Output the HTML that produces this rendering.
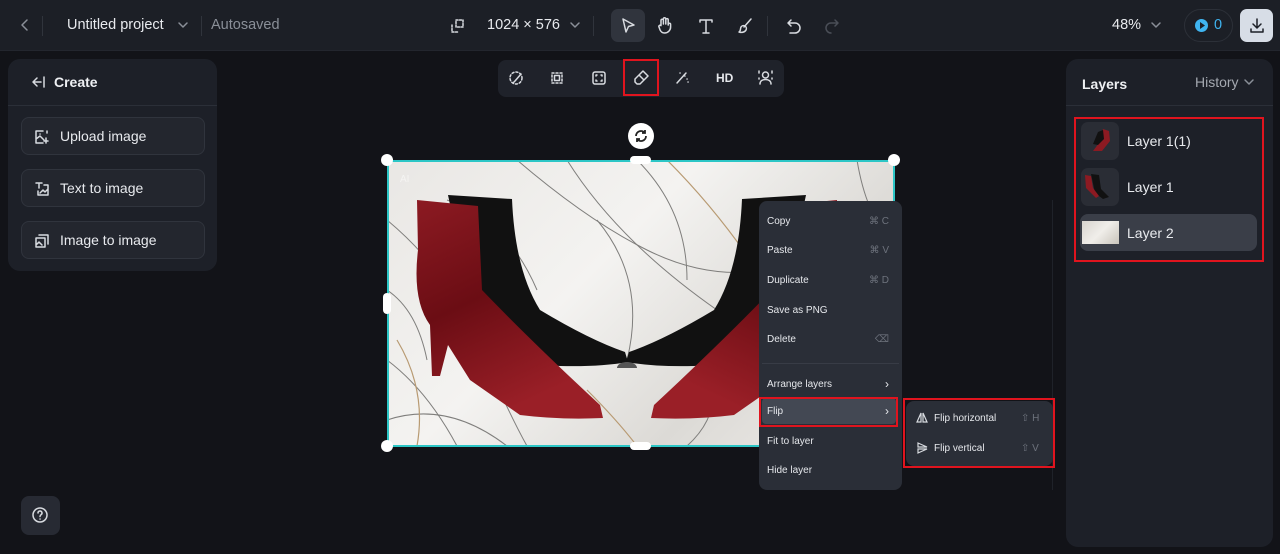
<!DOCTYPE html>
<html><head><meta charset="utf-8"><style>
*{box-sizing:border-box;margin:0;padding:0}
body{width:1280px;height:554px;overflow:hidden;background:#121318;font-family:"Liberation Sans",sans-serif;color:#e6e8ec;position:relative}
.abs{position:absolute}
.top{left:0;top:0;width:1280px;height:51px;background:#1c1f26;border-bottom:1px solid #23262e}
.panel{background:#1d2028;border-radius:12px}
.btn{position:absolute;left:21px;width:184px;height:38px;border:1px solid #30343d;background:#23262e;border-radius:8px;font-size:14px;color:#e8eaee;display:flex;align-items:center;padding-left:38px}
.btn svg{position:absolute;left:12px;top:11px}
.menu{background:#2a2e37;border-radius:8px;font-size:10px;color:#e6e8ec}
.mi{position:absolute;left:8px;font-size:10px}
.sc{position:absolute;right:13px;color:#6d727c;font-size:10px}
.ico{stroke:#d8dbe0;fill:none;stroke-width:1.5;stroke-linecap:round;stroke-linejoin:round}
</style></head><body>
<div class="abs top"></div>
<svg class="abs" style="left:18px;top:18px" width="14" height="14"><path class="ico" style="stroke:#8a8f98" d="M9 2 L4 7 L9 12"/></svg>
<div class="abs" style="left:42px;top:16px;width:1px;height:20px;background:#30343c"></div>
<div class="abs" style="left:67px;top:17px;font-size:14.5px;color:#e8eaee">Untitled project</div>
<svg class="abs" style="left:177px;top:20px" width="12" height="10"><path class="ico" style="stroke:#8a8f98" d="M2 3 L6 7 L10 3"/></svg>
<div class="abs" style="left:201px;top:16px;width:1px;height:20px;background:#30343c"></div>
<div class="abs" style="left:211px;top:17px;font-size:14.5px;color:#8a8f98">Autosaved</div>
<svg class="abs" style="left:450px;top:18px" width="16" height="16"><path class="ico" d="M6 2h7v7H6z M2 7v7h7" stroke-dasharray="2 1.5"/></svg>
<div class="abs" style="left:487px;top:17px;font-size:14.5px;color:#e8eaee">1024 × 576</div>
<svg class="abs" style="left:569px;top:20px" width="12" height="10"><path class="ico" style="stroke:#8a8f98" d="M2 3 L6 7 L10 3"/></svg>
<div class="abs" style="left:593px;top:16px;width:1px;height:20px;background:#30343c"></div>
<div class="abs" style="left:611px;top:9px;width:34px;height:33px;background:#30343d;border-radius:7px"></div>
<svg class="abs" style="left:619px;top:17px" width="18" height="18"><path class="ico" d="M4 2 L15 8 L9.5 9.5 L7 15 Z"/></svg>
<svg class="abs" style="left:656px;top:16px" width="18" height="18"><path class="ico" d="M5 9V4.5a1.2 1.2 0 0 1 2.4 0V8 M7.4 8V3a1.2 1.2 0 0 1 2.4 0v5 M9.8 8V3.8a1.2 1.2 0 0 1 2.4 0V9 M12.2 8.5a1.2 1.2 0 0 1 2.4 0V11a6 6 0 0 1-6 6 5 5 0 0 1-4.5-3L3 11a1.2 1.2 0 0 1 2-1.3"/></svg>
<svg class="abs" style="left:697px;top:17px" width="18" height="18"><path class="ico" d="M3 3h12M9 3v13M6 16h6M3 3v2M15 3v2"/></svg>
<svg class="abs" style="left:736px;top:17px" width="18" height="18"><path class="ico" d="M15 2 L8 10 M9 9a3 3 0 0 0-4 1c-1 2 0 4-2 5 3 1 6 0 7-2a3 3 0 0 0-1-4z"/></svg>
<div class="abs" style="left:767px;top:16px;width:1px;height:20px;background:#30343c"></div>
<svg class="abs" style="left:785px;top:17px" width="18" height="18"><path class="ico" d="M6 3L3 6l3 3 M3 6h7a5 5 0 0 1 0 10H5"/></svg>
<svg class="abs" style="left:823px;top:17px" width="18" height="18"><path class="ico" style="stroke:#4a4e57" d="M12 3l3 3-3 3 M15 6H8a5 5 0 0 0 0 10"/></svg>
<div class="abs" style="left:1112px;top:17px;font-size:14.5px;color:#e8eaee">48%</div>
<svg class="abs" style="left:1150px;top:20px" width="12" height="10"><path class="ico" style="stroke:#8a8f98" d="M2 3 L6 7 L10 3"/></svg>
<div class="abs" style="left:1184px;top:9px;width:49px;height:33px;border:1px solid #2c3038;border-radius:17px"></div>
<div class="abs" style="left:1195px;top:19px;width:13px;height:13px;border-radius:50%;background:#3fb4f0"></div>
<svg class="abs" style="left:1197px;top:21px" width="9" height="9"><path d="M3 1L8 4.5 3 8z" fill="#1c1f26"/></svg>
<div class="abs" style="left:1214px;top:17px;font-size:14.5px;color:#3fb4f0">0</div>
<div class="abs" style="left:1240px;top:9px;width:33px;height:33px;background:#d7dde6;border-radius:7px"></div>
<svg class="abs" style="left:1248px;top:17px" width="18" height="18"><path class="ico" style="stroke:#1c1f26" d="M9 2v9M5 7l4 4 4-4M3 12v3h12v-3"/></svg>

<div class="abs panel" style="left:8px;top:59px;width:209px;height:212px"></div>
<div class="abs" style="left:8px;top:105px;width:209px;height:1px;background:#2b2f38"></div>
<svg class="abs" style="left:30px;top:75px" width="16" height="14"><path class="ico" d="M7 3L3 7l4 4M3 7h8M14 2v10"/></svg>
<div class="abs" style="left:54px;top:74px;font-size:14px;font-weight:bold;color:#eef0f3">Create</div>
<div class="btn" style="top:117px"><svg width="16" height="16"><path class="ico" d="M9 2H2v12h7M2 10l4-3 4 4 M6 5h.1 M12 9v5M10 12h4 M13 2v2"/></svg>Upload image</div>
<div class="btn" style="top:169px"><svg width="16" height="16"><path class="ico" d="M2 2h6M5 2v5 M10 4h4v10H4v-4 M6 12l3-3 2 2 3-3"/></svg>Text to image</div>
<div class="btn" style="top:221px"><svg width="16" height="16"><path class="ico" d="M5 2h9v9 M2 5h9v9H2z M2 12l3-3 3 3"/></svg>Image to image</div>
<div class="abs" style="left:21px;top:496px;width:39px;height:39px;background:#272a33;border-radius:8px"></div>
<svg class="abs" style="left:31px;top:506px" width="18" height="18"><circle cx="9" cy="9" r="7" class="ico"/><path class="ico" d="M7 7a2 2 0 1 1 3 1.7c-.8.5-1 1-1 1.8M9 13h.1"/></svg>

<div class="abs" style="left:498px;top:60px;width:286px;height:37px;background:#1f222a;border-radius:8px"></div>
<svg class="abs" style="left:508px;top:70px" width="16" height="16"><circle cx="8" cy="8" r="6" class="ico" stroke-dasharray="2 2"/><path class="ico" d="M13 4L7 11 M7 11l-2 2"/></svg>
<svg class="abs" style="left:549px;top:70px" width="16" height="16"><path class="ico" d="M3 3h10v10H3z" stroke-dasharray="2 2"/><rect x="5.5" y="5.5" width="5" height="5" class="ico"/></svg>
<svg class="abs" style="left:591px;top:70px" width="16" height="16"><rect x="2" y="2" width="12" height="12" rx="2" class="ico"/><path class="ico" d="M5 6V5h1M10 5h1v1M11 10v1h-1M6 11H5v-1"/></svg>
<div class="abs" style="left:623px;top:59px;width:36px;height:37px;border:2px solid #e0141e"></div>
<svg class="abs" style="left:633px;top:69px" width="17" height="17"><path class="ico" d="M10 2l5 5-8 8H4l-2-2v-3z M6 6l5 5"/></svg>
<svg class="abs" style="left:674px;top:70px" width="16" height="16"><path class="ico" d="M12 3L3 13 M10 5l1 1 M13 9h.1M14 12h.1M6 3h.1"/></svg>
<div class="abs" style="left:716px;top:71px;font-size:12px;font-weight:bold;color:#e6e8ec">HD</div>
<svg class="abs" style="left:757px;top:69px" width="17" height="17"><circle cx="8.5" cy="6" r="3" class="ico"/><path class="ico" d="M3 15c0-3 2.5-4.5 5.5-4.5S14 12 14 15 M2 2v2M15 2v2M2 9v1M15 9v1"/></svg>

<div class="abs" style="left:628px;top:123px;width:26px;height:26px;border-radius:50%;background:#fff"></div>
<svg class="abs" style="left:633px;top:128px" width="16" height="16"><path d="M3 8a5 5 0 0 1 9-3 M13 8a5 5 0 0 1-9 3 M12 2v3h-3 M4 14v-3h3" stroke="#222" stroke-width="1.8" fill="none"/></svg>

<div class="abs" style="left:387px;top:160px;width:507px;height:286px;overflow:hidden;background:linear-gradient(135deg,#e9e7e4,#f4f3f1 40%,#dcdad6 70%,#efedea)">
<svg width="507" height="286" style="position:absolute;left:0;top:0">
<g fill="none" stroke="#7f7e7c" stroke-width="1">
<path d="M0 60 Q60 110 90 180 T140 286"/><path d="M130 0 Q200 60 260 90 T380 110"/><path d="M180 0 Q230 80 330 150 T420 286"/><path d="M0 200 Q40 230 70 286"/><path d="M250 0 Q300 50 300 120"/><path d="M470 0 Q480 60 507 80"/><path d="M0 130 Q30 150 40 200"/><path d="M320 200 Q340 250 300 286"/><path d="M60 40 Q120 60 150 130"/><path d="M210 60 Q260 120 240 200"/><path d="M0 260 Q60 240 120 286"/>
</g>
<g fill="none" stroke="#b89a72" stroke-width="1.2"><path d="M280 0 Q330 50 370 110"/><path d="M10 180 Q40 230 30 286"/><path d="M200 230 Q230 260 250 286"/></g>
</svg>
<div class="abs" style="left:13px;top:14px;font-size:10px;color:rgba(255,255,255,.5)">AI</div>
</div>
<svg class="abs" style="left:0;top:0" width="1280" height="554">
<defs><linearGradient id="rg" x1="0" y1="0" x2="0.4" y2="1"><stop offset="0" stop-color="#8c1a22"/><stop offset="0.5" stop-color="#6b0d14"/><stop offset="1" stop-color="#9a1f27"/></linearGradient></defs>
<g id="bt">
<path d="M448,195 L512,199 Q515,270 540,310 Q590,340 625,352 L628,362 Q600,367 560,366 L480,360 Q470,300 448,195 Z" fill="#111"/>
<path d="M417,200 L478,206 L482,290 Q530,340 600,405 L603,418 Q560,420 520,415 L470,380 L448,345 L440,376 L432,376 L430,325 Q412,300 418,250 Z" fill="url(#rg)"/>
</g>
<use href="#bt" transform="translate(1254,0) scale(-1,1)"/>
<path d="M617 368 h20 a10 6 0 0 0-20 0z" fill="#555"/>
</svg>
<div class="abs" style="left:387px;top:160px;width:508px;height:287px;border:2px solid #2cc6c6"></div>
<div class="abs" style="left:381px;top:154px;width:12px;height:12px;border-radius:50%;background:#fff"></div>
<div class="abs" style="left:888px;top:154px;width:12px;height:12px;border-radius:50%;background:#fff"></div>
<div class="abs" style="left:381px;top:440px;width:12px;height:12px;border-radius:50%;background:#fff"></div>
<div class="abs" style="left:630px;top:156px;width:21px;height:8px;border-radius:4px;background:#fff"></div>
<div class="abs" style="left:630px;top:442px;width:21px;height:8px;border-radius:4px;background:#fff"></div>
<div class="abs" style="left:383px;top:293px;width:8px;height:21px;border-radius:4px;background:#fff"></div>
<div class="abs" style="left:1052px;top:200px;width:1px;height:290px;background:#1f2229"></div>

<div class="abs menu" style="left:759px;top:201px;width:143px;height:289px">
<div class="mi" style="top:15px">Copy</div><div class="sc" style="top:15px">⌘ C</div>
<div class="mi" style="top:44px">Paste</div><div class="sc" style="top:44px">⌘ V</div>
<div class="mi" style="top:74px">Duplicate</div><div class="sc" style="top:74px">⌘ D</div>
<div class="mi" style="top:104px">Save as PNG</div>
<div class="mi" style="top:133px">Delete</div><div class="sc" style="top:133px">⌫</div>
<div class="abs" style="left:3px;top:162px;width:137px;height:1px;background:#383c46"></div>
<div class="mi" style="top:178px">Arrange layers</div><div class="sc" style="top:176px;color:#e6e8ec;font-size:12px">›</div>
<div class="abs" style="left:3px;top:197px;width:134px;height:26px;background:#434853;border-radius:4px"></div>
<div class="mi" style="top:205px">Flip</div><div class="sc" style="top:203px;color:#e6e8ec;font-size:12px">›</div>
<div class="mi" style="top:235px">Fit to layer</div>
<div class="mi" style="top:264px">Hide layer</div>
</div>
<div class="abs" style="left:759px;top:397px;width:139px;height:30px;border:2px solid #e0141e"></div>
<div class="abs menu" style="left:906px;top:401px;width:147px;height:65px"></div>
<div class="abs" style="left:903px;top:398px;width:152px;height:70px;border:2px solid #e0141e"></div>
<svg class="abs" style="left:916px;top:412px" width="12" height="11"><path d="M5 1L1 10h4z M7 1l4 9H7z" fill="none" stroke="#d8dbe0" stroke-width="1.2"/></svg>
<div class="abs" style="left:934px;top:413px;font-size:10px">Flip horizontal</div><div class="abs" style="left:1021px;top:413px;font-size:10px;color:#6d727c">⇧ H</div>
<svg class="abs" style="left:917px;top:442px" width="11" height="12"><path d="M1 1l9 4H1z M1 7h9l-9 4z" fill="none" stroke="#d8dbe0" stroke-width="1.2"/></svg>
<div class="abs" style="left:934px;top:443px;font-size:10px">Flip vertical</div><div class="abs" style="left:1021px;top:443px;font-size:10px;color:#6d727c">⇧ V</div>

<div class="abs panel" style="left:1066px;top:59px;width:207px;height:488px"></div>
<div class="abs" style="left:1066px;top:105px;width:207px;height:1px;background:#2b2f38"></div>
<div class="abs" style="left:1082px;top:76px;font-size:14px;font-weight:bold;color:#eef0f3">Layers</div>
<div class="abs" style="left:1195px;top:74px;font-size:14px;color:#a4a8b0">History</div>
<svg class="abs" style="left:1243px;top:77px" width="12" height="10"><path class="ico" style="stroke:#8a8f98" d="M2 3 L6 7 L10 3"/></svg>
<div class="abs" style="left:1080px;top:214px;width:177px;height:37px;background:#3a3e48;border-radius:8px"></div>
<div class="abs" style="left:1081px;top:122px;width:38px;height:38px;background:#2a2d35;border-radius:7px"></div>
<svg class="abs" style="left:1089px;top:128px" width="26" height="26"><path d="M14 1l6 2 1 10-8 10-9 0 6-8z" fill="#8c1a22"/><path d="M9 4l5-2 1 9-6 6-5-1z" fill="#111"/></svg>
<div class="abs" style="left:1081px;top:168px;width:38px;height:38px;background:#2a2d35;border-radius:7px"></div>
<svg class="abs" style="left:1083px;top:172px" width="30" height="30"><path d="M8 2l8 1 2 14 8 8-6 2-8-6z" fill="#111"/><path d="M2 3l6 1 2 12 6 8-3 2-10-10z" fill="#8c1a22"/></svg>
<div class="abs" style="left:1082px;top:221px;width:37px;height:23px;background:linear-gradient(135deg,#d7d4cf,#f0eeea,#c9c4bb)"></div>
<div class="abs" style="left:1127px;top:133px;font-size:14px;color:#e8eaee">Layer 1(1)</div>
<div class="abs" style="left:1127px;top:179px;font-size:14px;color:#e8eaee">Layer 1</div>
<div class="abs" style="left:1127px;top:225px;font-size:14px;color:#e8eaee">Layer 2</div>
<div class="abs" style="left:1074px;top:117px;width:190px;height:145px;border:2px solid #e0141e"></div>
</body></html>
